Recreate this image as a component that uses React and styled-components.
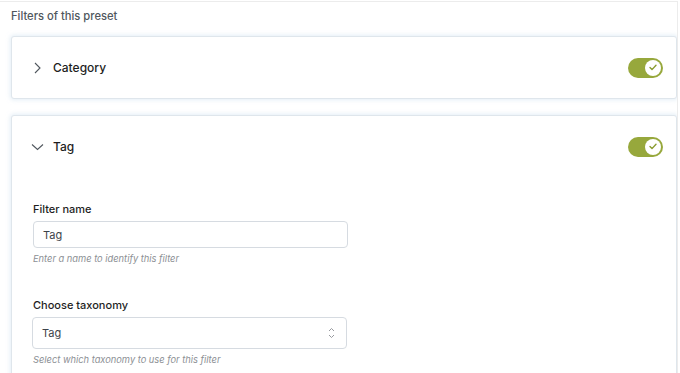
import styled, { createGlobalStyle } from "styled-components";

const GlobalStyle = createGlobalStyle`
  html, body {
    margin: 0;
    padding: 0;
    background: #ffffff;
    font-family: Inter, "Liberation Sans", sans-serif;
    -webkit-font-smoothing: antialiased;
  }
`;

const StyledPanel = styled.section`
  box-sizing: border-box;
  width: 678px;
  height: 372px;
  margin-top: 1px;
  border-top: 1px solid #ececec;
  border-right: 1px solid #ececec;
  padding: 0 0 0 11px;
  overflow: hidden;
`;

const StyledTitle = styled.h3`
  margin: 0;
  padding: 6px 0 0;
  height: 28px;
  box-sizing: border-box;
  font-size: 11.2px;
  font-weight: 500;
  color: #50575e;
  line-height: 16px;
`;

const StyledList = styled.div`
  display: flex;
  flex-direction: column;
  gap: 16px;
  padding-top: 6px;
`;

const StyledCard = styled.article`
  box-sizing: border-box;
  background: #ffffff;
  border: 1px solid #dfe6ec;
  border-radius: 3px;
  box-shadow: 0 0 4px 1px rgba(206, 224, 238, 0.55);
`;

const StyledHeader = styled.header`
  display: flex;
  align-items: center;
  height: 61px;
  padding: 0 13px 0 19px;
`;

const StyledChevron = styled.span`
  display: flex;
  align-items: center;
  justify-content: center;
  width: 13px;
  margin-right: 9px;
  color: #50575e;
`;

const StyledName = styled.span`
  flex: 1;
  font-size: 12px;
  font-weight: 500;
  color: #1e1e1e;
`;

const StyledToggle = styled.span`
  display: flex;
  align-items: center;
  justify-content: flex-end;
  box-sizing: border-box;
  width: 35px;
  height: 20px;
  padding: 2px;
  border-radius: 10px;
  background: #97a83c;
`;

const StyledKnob = styled.span`
  display: flex;
  align-items: center;
  justify-content: center;
  width: 16px;
  height: 16px;
  border-radius: 50%;
  background: #ffffff;
  color: #8a9c30;
`;

const StyledBody = styled.div`
  padding: 24px 0 30px 21px;
  display: flex;
  flex-direction: column;
  gap: 32px;
`;

const StyledField = styled.div`
  display: flex;
  flex-direction: column;
`;

const StyledLabel = styled.label`
  font-size: 11px;
  font-weight: 500;
  color: #1e1e1e;
  line-height: 16px;
  margin-bottom: 4px;
`;

const StyledInput = styled.div`
  box-sizing: border-box;
  display: flex;
  align-items: center;
  justify-content: space-between;
  width: 315px;
  height: ${(p) => (p.$select ? "32px" : "27px")};
  padding: 0 11px 0 9px;
  margin-left: ${(p) => (p.$select ? "-1px" : "0")};
  border: 1px solid #d6dbe1;
  border-radius: 4px;
  font-size: 11px;
  color: #3c434a;
`;

const StyledHelp = styled.p`
  margin: 5px 0 0;
  font-size: 9.3px;
  font-style: italic;
  color: #8c8f94;
  line-height: 12px;
`;

function Chevron({ open }) {
  return (
    <StyledChevron>
      {open ? (
        <svg width="13" height="8" viewBox="0 0 13 8" fill="none">
          <path d="M1 1.5l5.5 5 5.5-5" stroke="currentColor" strokeWidth="1.1" />
        </svg>
      ) : (
        <svg width="7" height="12" viewBox="0 0 7 12" fill="none">
          <path d="M1 1l5 5-5 5" stroke="currentColor" strokeWidth="1.1" />
        </svg>
      )}
    </StyledChevron>
  );
}

function Toggle() {
  return (
    <StyledToggle>
      <StyledKnob>
        <svg width="8" height="7" viewBox="0 0 8 7" fill="none">
          <path d="M1 3.6l2 2 4-4.4" stroke="currentColor" strokeWidth="1.4" strokeLinecap="round" strokeLinejoin="round" />
        </svg>
      </StyledKnob>
    </StyledToggle>
  );
}

function Updown() {
  return (
    <svg width="7" height="12" viewBox="0 0 7 12" fill="none">
      <path d="M1 4l2.5-2.5L6 4M1 8l2.5 2.5L6 8" stroke="#8c8f94" strokeWidth="0.9" />
    </svg>
  );
}

export default function App() {
  return (
    <>
      <GlobalStyle />
      <StyledPanel>
        <StyledTitle>Filters of this preset</StyledTitle>
        <StyledList>
          <StyledCard>
            <StyledHeader>
              <Chevron />
              <StyledName>Category</StyledName>
              <Toggle />
            </StyledHeader>
          </StyledCard>
          <StyledCard>
            <StyledHeader>
              <Chevron open />
              <StyledName>Tag</StyledName>
              <Toggle />
            </StyledHeader>
            <StyledBody>
              <StyledField>
                <StyledLabel>Filter name</StyledLabel>
                <StyledInput>Tag</StyledInput>
                <StyledHelp>Enter a name to identify this filter</StyledHelp>
              </StyledField>
              <StyledField>
                <StyledLabel>Choose taxonomy</StyledLabel>
                <StyledInput $select>
                  Tag
                  <Updown />
                </StyledInput>
                <StyledHelp>Select which taxonomy to use for this filter</StyledHelp>
              </StyledField>
            </StyledBody>
          </StyledCard>
        </StyledList>
      </StyledPanel>
    </>
  );
}
